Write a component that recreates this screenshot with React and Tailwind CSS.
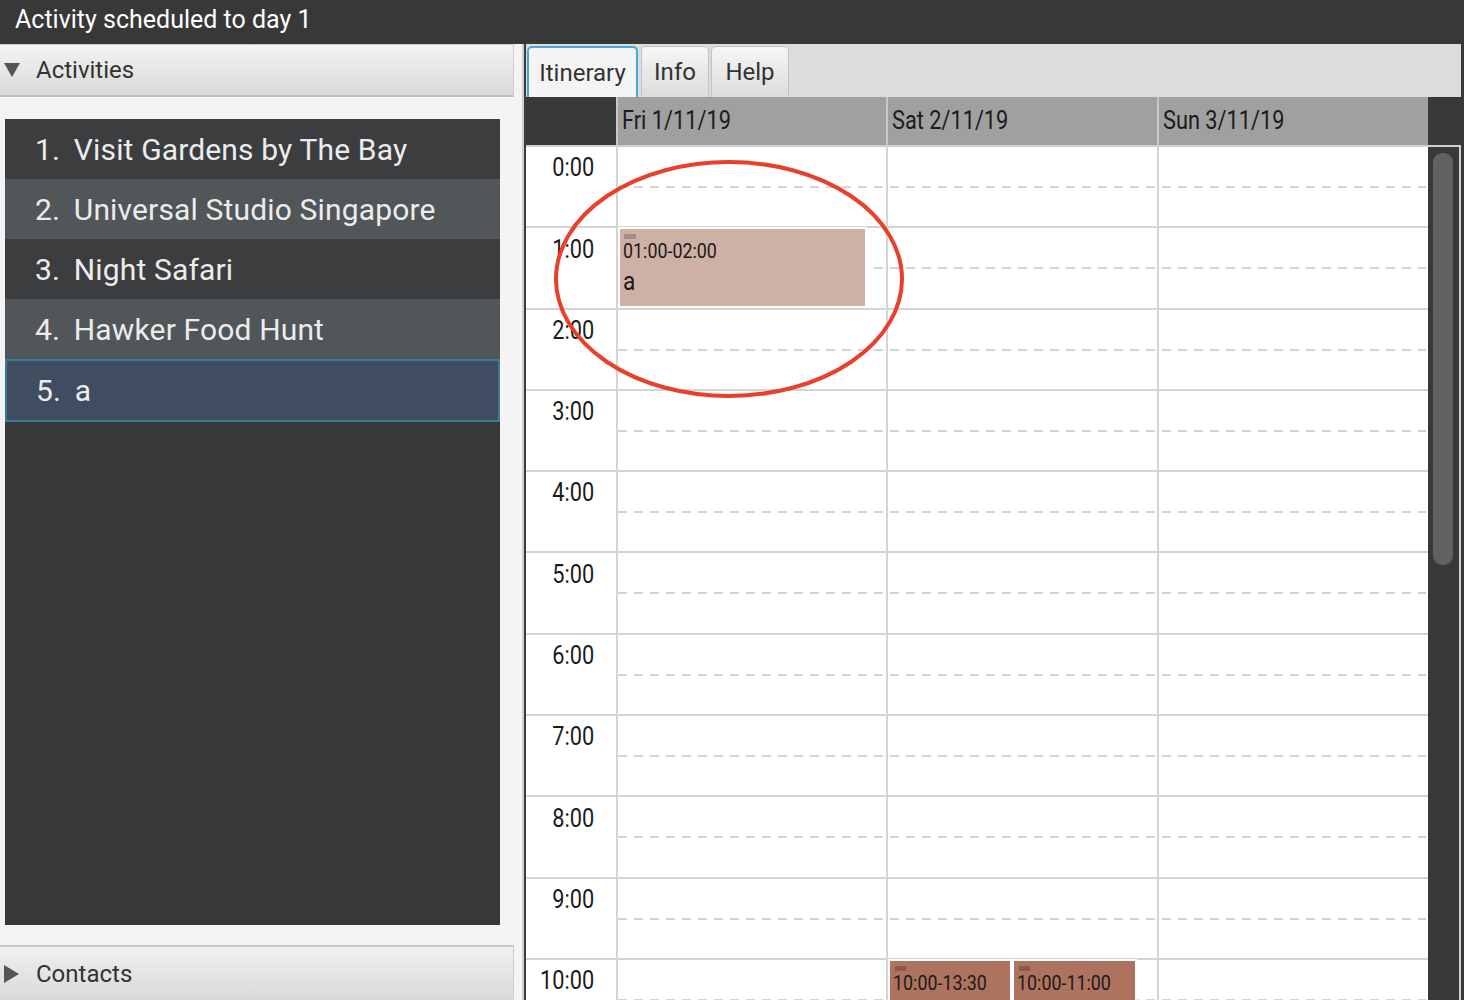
import React from "react";

const ACTIVITIES = [
  "Visit Gardens by The Bay",
  "Universal Studio Singapore",
  "Night Safari",
  "Hawker Food Hunt",
  "a",
];
const DAYS = ["Fri 1/11/19", "Sat 2/11/19", "Sun 3/11/19"];
const HOURS = Array.from({ length: 11 }, (_, i) => `${i}:00`);

function LeftPane() {
  return (
    <div className="w-[524px] h-full flex flex-col bg-[#f4f4f4] border-r-2 border-[#d0d0d0]">
      <div className="w-[514px] h-[53px] flex items-center border-t border-t-[#c8c8c8] border-b-2 border-b-[#bdbdbd] border-r border-r-[#cfcfcf] bg-linear-to-b from-[#f4f4f4] to-[#d9d9d9] text-[24px] text-[#333]">
        <svg className="ml-[4px] mr-[16px]" width="16" height="14" viewBox="0 0 16 14">
          <polygon points="0,0 16,0 8,14" fill="#555" />
        </svg>
        Activities
      </div>

      <div className="flex-1 pt-[22px] pl-[5px] pb-[20px]">
        <div className="w-[495px] h-full bg-[#383838]">
          {ACTIVITIES.map((name, i) => {
            const selected = i === 4;
            const odd = i % 2 === 1;
            return (
              <div
                key={name}
                className={
                  selected
                    ? "h-[63px] flex items-center gap-[14px] pl-[29px] border-2 border-[#3b7b92] bg-[#404c5f] text-[30px] text-[#ececec]"
                    : odd
                    ? "h-[60px] flex items-center gap-[14px] pl-[30px] bg-[#515658] text-[30px] text-[#ececec]"
                    : "h-[60px] flex items-center gap-[14px] pl-[30px] bg-[#3c3d3f] text-[30px] text-[#ececec]"
                }
              >
                <span>{i + 1}.</span>
                <span className="tracking-[0.005em]">{name}</span>
              </div>
            );
          })}
        </div>
      </div>

      <div className="w-[514px] h-[55px] flex items-center border-t-2 border-t-[#c8c8c8] border-r border-r-[#cfcfcf] bg-linear-to-b from-[#f0f0f0] to-[#d9d9d9] text-[24px] text-[#333]">
        <svg className="ml-[4px] mr-[17px]" width="15" height="18" viewBox="0 0 15 18">
          <polygon points="0,0 15,9 0,18" fill="#555" />
        </svg>
        Contacts
      </div>
    </div>
  );
}

function Tabs() {
  return (
    <div className="h-[53px] flex items-end pl-[1px] bg-[#dddddd] text-[24px] text-[#333]">
      <div className="w-[111px] h-[51px] flex items-center justify-center border-2 border-b-0 border-[#4aa8d8] rounded-t-[5px] bg-[#f4f4f4]">
        Itinerary
      </div>
      <div className="ml-[3px] w-[68px] h-[51px] flex items-center justify-center border border-b-0 border-[#c2c2c2] rounded-t-[5px] bg-linear-to-b from-[#f6f6f6] to-[#dcdcdc]">
        Info
      </div>
      <div className="ml-[2px] w-[78px] h-[51px] flex items-center justify-center border border-b-0 border-[#c2c2c2] rounded-t-[5px] bg-linear-to-b from-[#f6f6f6] to-[#dcdcdc]">
        Help
      </div>
    </div>
  );
}

function Event({ time, title, light }) {
  return (
    <div
      className={
        light
          ? "h-full border-2 border-white bg-[#cfb0a5] text-[#1a1a1a]"
          : "h-full border-2 border-white bg-[#ad735f] text-[#1a1a1a]"
      }
    >
      <div className={light ? "ml-[4px] mt-[5px] w-[12px] h-[5px] bg-[#a58c86]" : "ml-[5px] mt-[5px] w-[11px] h-[5px] bg-[#8b5a4a]"} />
      <div className="mt-[2px] pl-[3px] h-[20px] text-[21px] leading-[20px]">
        <span className="inline-block origin-left scale-x-[0.85]">{time}</span>
      </div>
      <div className="mt-[7px] pl-[3px] text-[26px] leading-[26px]">
        <span className="inline-block origin-left scale-x-[0.87]">{title}</span>
      </div>
    </div>
  );
}

function Calendar() {
  return (
    <div className="flex-1 flex flex-col bg-white overflow-hidden">
      <div className="h-[50px] flex border-b-2 border-[#cfcfcf] bg-[#383838] text-[25px] text-[#1b1b1b]">
        <div className="w-[92px] border-r-2 border-[#c8c8c8]" />
        <div className="w-[270px] flex items-center pl-[4px] bg-[#a0a0a0] border-r-2 border-[#c8c8c8]">
          <span className="inline-block origin-left scale-x-[0.87]">{DAYS[0]}</span>
        </div>
        <div className="w-[271px] flex items-center pl-[4px] bg-[#a0a0a0] border-r-2 border-[#c8c8c8]">
          <span className="inline-block origin-left scale-x-[0.87]">{DAYS[1]}</span>
        </div>
        <div className="w-[269px] flex items-center pl-[4px] bg-[#a0a0a0]">
          <span className="inline-block origin-left scale-x-[0.87]">{DAYS[2]}</span>
        </div>
      </div>

      <div className="flex-1 flex overflow-hidden">
        <div className="relative w-[902px]">
          {HOURS.map((h) => (
            <div key={h} className="relative h-[81.3px] flex border-b-2 border-[#d4d4d4]">
              <div className="w-[92px] h-[42px] flex items-center justify-end pr-[24px] text-[25px] text-[#1b1b1b]">
                <span className="inline-block origin-right scale-x-[0.87]">{h}</span>
              </div>
              <div className="absolute left-[90px] top-0 bottom-[-2px] w-[2px] bg-[#d4d4d4]" />
              <div className="w-[270px] border-r-2 border-[#d4d4d4]" />
              <div className="w-[271px] border-r-2 border-[#d4d4d4]" />
              <div className="w-[269px]" />
              <div className="absolute left-[92px] right-[2px] top-[39px] h-[2px] bg-[repeating-linear-gradient(90deg,#d4d4d4_0px,#d4d4d4_9px,transparent_9px,transparent_16px)]" />
            </div>
          ))}

          <div className="absolute left-[92px] top-[80px] w-[249px] h-[81px]">
            <Event time="01:00-02:00" title="a" light />
          </div>
          <div className="absolute left-[362px] top-[812px] w-[124px] h-[285px]">
            <Event time="10:00-13:30" title="" />
          </div>
          <div className="absolute left-[486px] top-[812px] w-[125px] h-[83px]">
            <Event time="10:00-11:00" title="" />
          </div>
        </div>

        <div className="w-[33px] bg-[#383838] border-r-2 border-[#cfcfcf]">
          <div className="ml-[5px] mt-[6px] w-[20px] h-[412px] rounded-[9px] bg-[#616161]" />
        </div>
      </div>
    </div>
  );
}

function RightPane() {
  return (
    <div className="w-[937px] h-full flex flex-col border-l-2 border-[#3c3c3c] bg-[#dddddd]">
      <Tabs />
      <Calendar />
    </div>
  );
}

export default function App() {
  return (
    <div className="relative w-[1464px] h-[1000px] overflow-hidden bg-[#383838] font-['Roboto',sans-serif]">
      <div className="h-[44px] flex items-center pl-[15px] pb-[5px] text-[25px] text-white">
        Activity scheduled to day 1
      </div>
      <div className="flex h-[956px]">
        <LeftPane />
        <RightPane />
      </div>
      <svg className="absolute left-[553px] top-[159px]" width="352" height="240" viewBox="0 0 352 240">
        <ellipse cx="176" cy="120" rx="173" ry="117" fill="none" stroke="#e8402a" strokeWidth="4" />
      </svg>
    </div>
  );
}
